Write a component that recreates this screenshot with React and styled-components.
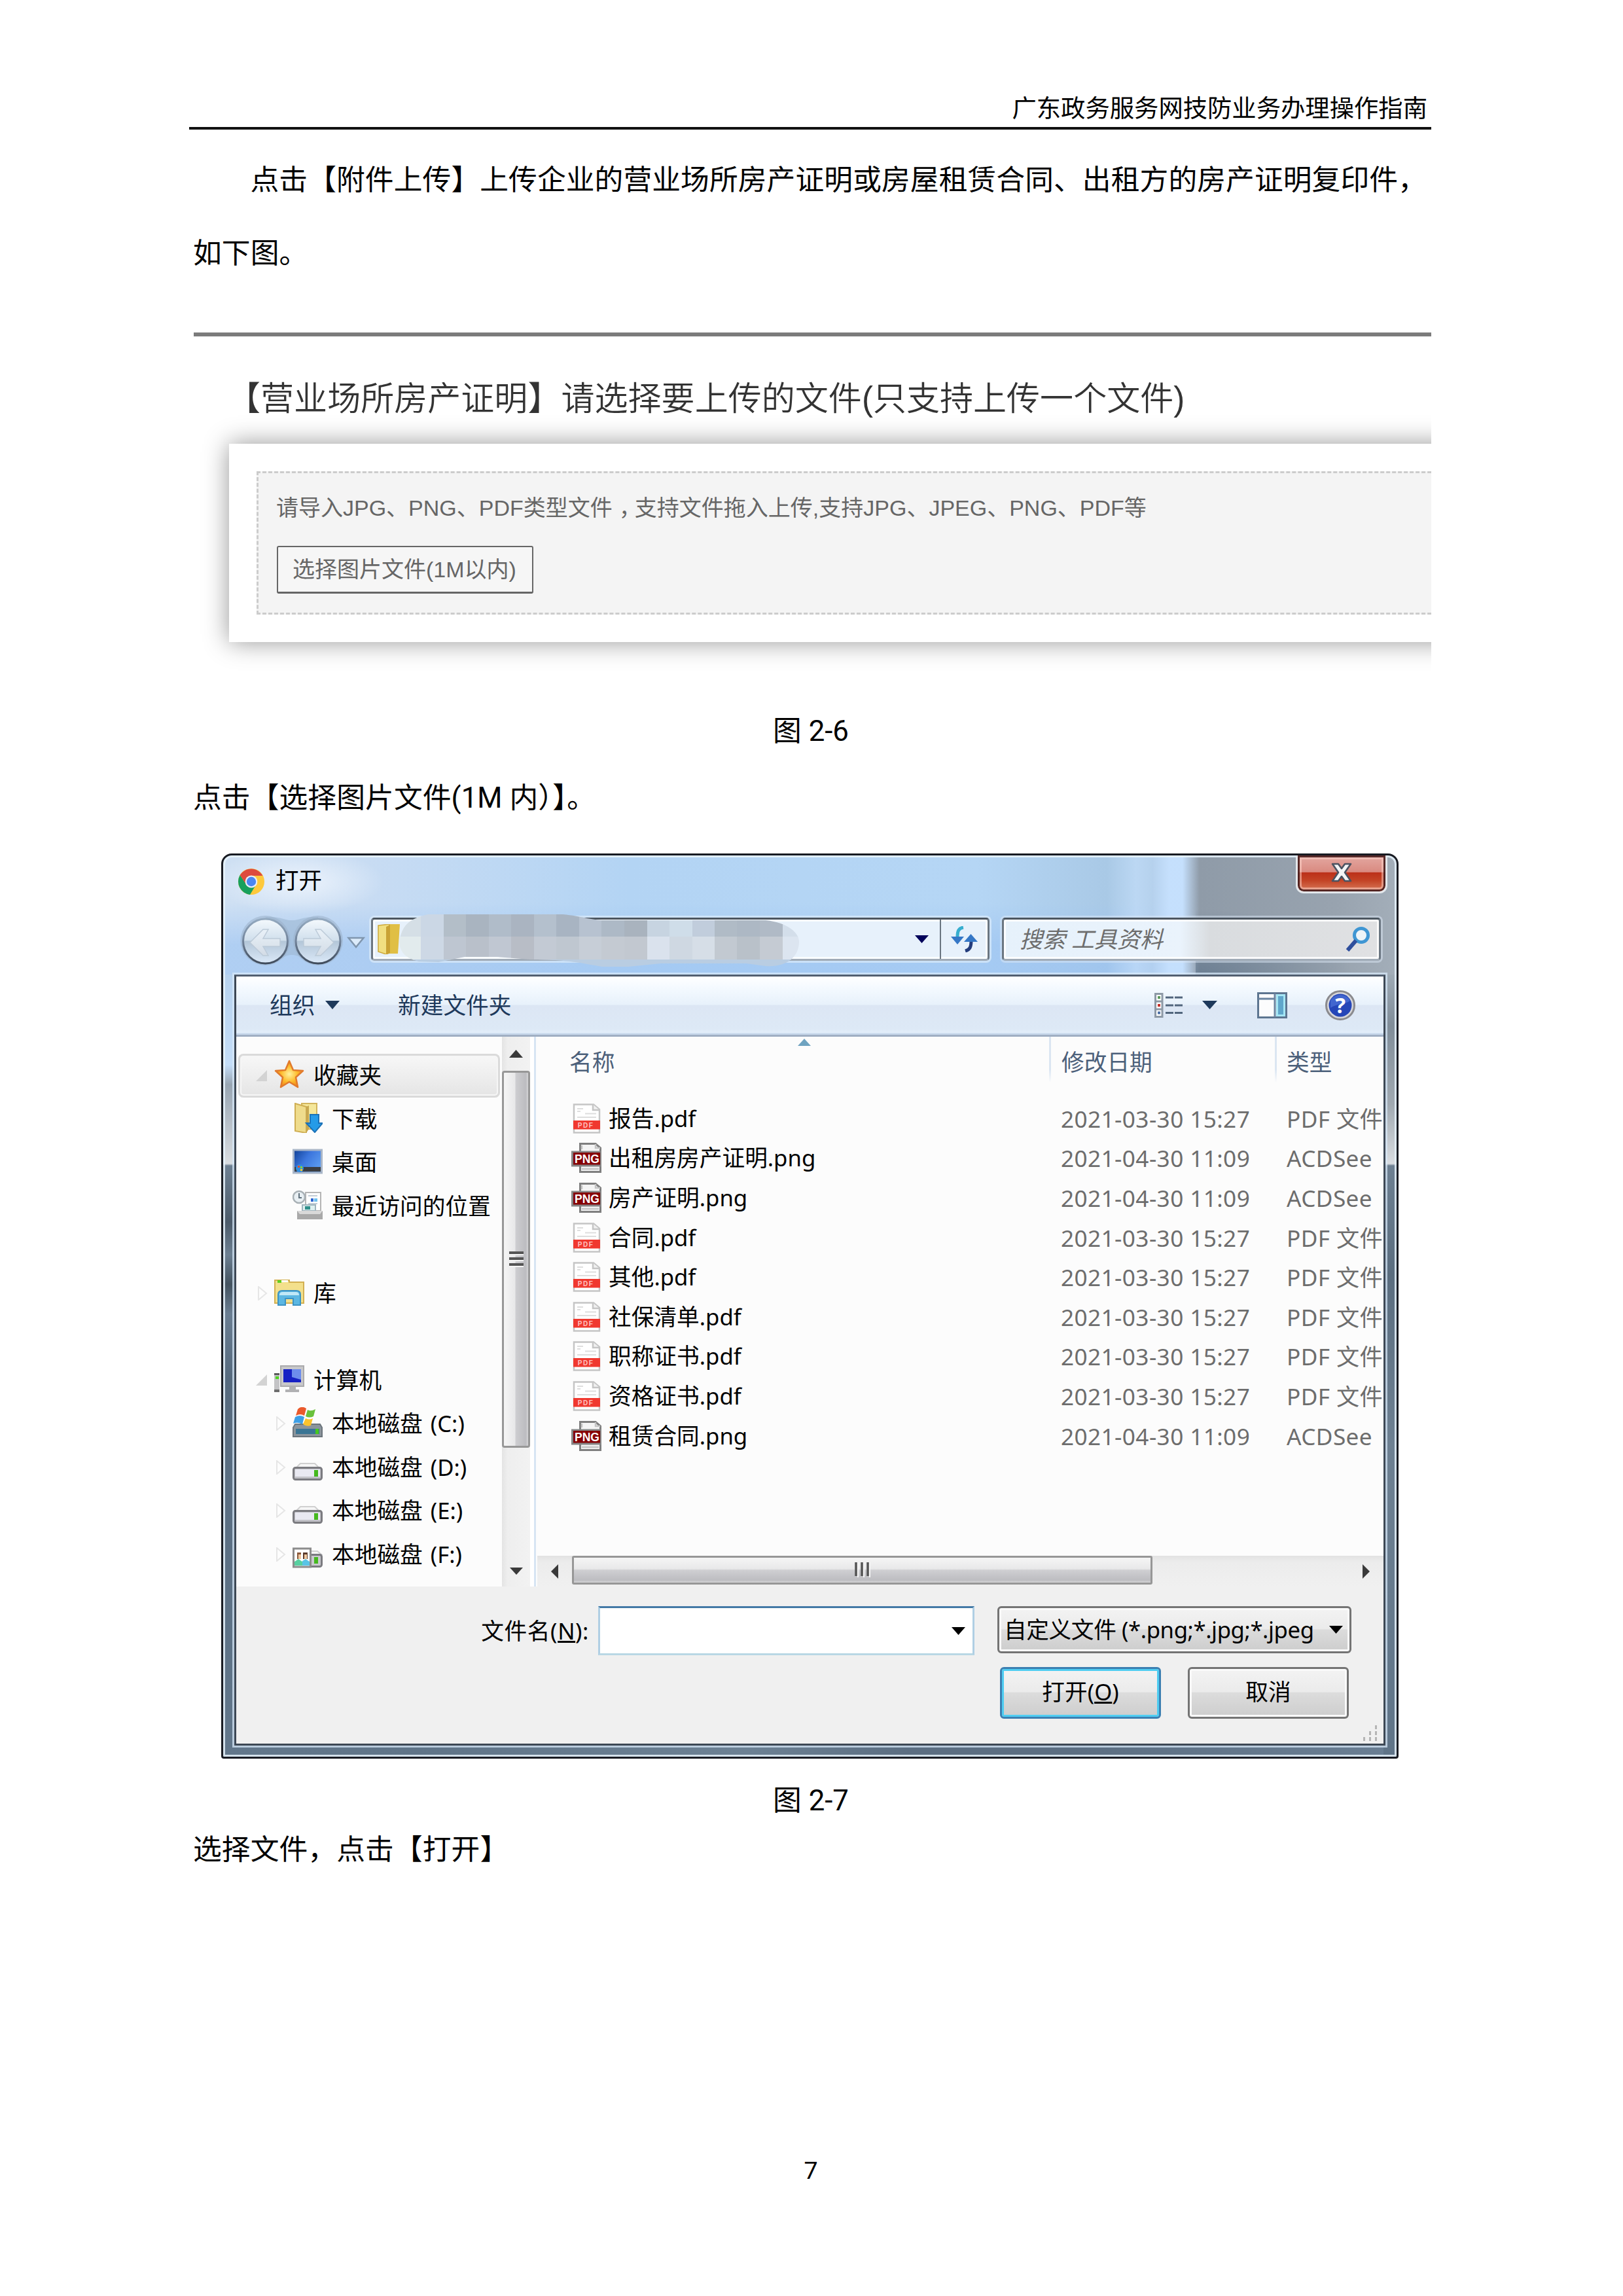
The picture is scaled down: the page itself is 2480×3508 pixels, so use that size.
import React from "react";
import styled, { createGlobalStyle, css } from "styled-components";

const GlobalStyle = createGlobalStyle`
  * {
    box-sizing: border-box;
  }
  body {
    margin: 0;
    background: #fff;
  }
  svg {
    display: block;
    flex: none;
  }
`;

const docFont = `Roboto, "Noto Sans CJK SC", sans-serif`;
const webFont = `"Liberation Sans", "Noto Sans CJK SC", sans-serif`;
const winFont = `"Noto Sans", "Noto Sans CJK SC", sans-serif`;

/* ---------- document ---------- */

const Page = styled.div`
  width: 2480px;
  height: 3508px;
  padding: 0 293px 0 295px;
  display: flex;
  flex-direction: column;
  background: #fff;
  color: #000;
  font-family: ${docFont};
  font-size: 43.75px;
  overflow: hidden;
`;

const PageHeader = styled.header`
  height: 198px;
  margin: 0 0 21px -6px;
  padding: 136px 6px 0 0;
  border-bottom: 4px solid #111;
  font-size: 37.35px;
  line-height: 60px;
  text-align: right;
`;

const Paragraph = styled.p`
  margin: ${(p) => p.$top || 0}px 0 0;
  line-height: ${(p) => p.$line || 80}px;
  text-indent: ${(p) => (p.$indent ? "2em" : 0)};
  letter-spacing: 0.09px;
  white-space: nowrap;
`;

const Caption = styled.p`
  margin: ${(p) => p.$top}px 0 0;
  line-height: ${(p) => p.$line || 80}px;
  padding-right: 4px;
  text-align: center;
`;

const PageNumber = styled.footer`
  margin-top: 430px;
  padding-right: 4px;
  font-size: 37.5px;
  line-height: 60px;
  text-align: center;
`;

/* ---------- upload panel ---------- */

const UploadFigure = styled.section`
  height: 530px;
  margin: 65px 0 0 1px;
  border-top: 6px solid #7b7b7b;
  padding: 64px 0 0 54px;
  overflow: hidden;
  font-family: ${webFont};
`;

const UploadTitle = styled.h2`
  margin: 0 0 0 -3px;
  height: 100px;
  font-size: 51.05px;
  line-height: 64px;
  font-weight: 350;
  color: #333;
  white-space: nowrap;
`;

const UploadCard = styled.div`
  width: 1900px;
  height: 303px;
  padding: 42px 0 0 42px;
  background: #fff;
  box-shadow: 0 0 36px rgba(0, 0, 0, 0.42);
`;

const DropZone = styled.div`
  height: 219px;
  padding: 31px 0 0 27px;
  border: 3px dashed #ccc;
  border-right: 0;
  background: #f4f4f4;
  color: #666;
  font-size: 34px;
  line-height: 44px;
  white-space: nowrap;
`;

const WideComma = styled.span`
  padding-left: 10px;
  letter-spacing: -10px;
`;

const PickButton = styled.button`
  display: block;
  width: 392px;
  height: 73px;
  margin: 36px 0 0 1px;
  padding: 0 0 0 22px;
  border: 2px solid #666;
  border-bottom-width: 3px;
  border-radius: 3px;
  background: #f6f6f6;
  color: #666;
  font: inherit;
  text-align: left;
`;

/* ---------- file dialog ---------- */

const Window = styled.section`
  width: 1799px;
  height: 1383px;
  margin: 45px 0 0 43px;
  padding: 0 17px 17px;
  border: 3px solid #181b22;
  border-radius: 16px 16px 4px 4px;
  display: flex;
  flex-direction: column;
  color: #000;
  font-family: ${winFont};
  font-size: 34.7px;
  line-height: 46px;
  box-shadow: inset 0 0 0 3px rgba(232, 243, 252, 0.85);
  background:
    radial-gradient(ellipse 130px 50px at 115px 40px, rgba(240, 246, 253, 0.9), transparent) no-repeat,
    radial-gradient(ellipse 240px 100px at 0 100%, rgba(85, 108, 132, 0.6), transparent) 1486px 0 / 308px 182px no-repeat,
    linear-gradient(90deg, transparent 1350px, rgba(200, 225, 252, 0.6) 1395px, rgba(190, 215, 242, 0.6) 1420px, rgba(200, 226, 255, 0.9) 1445px 1466px, #8f9ba8 1492px, #98a3af 1700px, #a3aeb9) 0 0 / 100% 182px no-repeat,
    linear-gradient(180deg, transparent 40%, rgba(155, 195, 242, 0.6) 75%) 0 0 / 100% 182px no-repeat,
    linear-gradient(90deg, #cfe0f3 0, #c8dcf3 220px, #b3d4f4 620px, #b5d6f5 1150px, #a9c9e6 1350px) 0 0 / 100% 182px no-repeat,
    linear-gradient(180deg, #9fabb6 180px, #808d99 260px, #a0a9b1 380px, #d9dde1 471px, #6d8092 474px, #5a6d7f 640px, #6d8092 900px, #5f7488 1377px) 100% 0 / 20px 100% no-repeat,
    linear-gradient(180deg, #b7d2ee 180px, #c4ddf8 320px, #98a5b2 350px, #d9dde1 471px, #6d8092 474px, #4c5b6a 560px, #6d8092 610px, #43525f 655px, #6a7e92 700px, #566a7e 800px, #62778b) 0 0 / 20px 100% no-repeat,
    linear-gradient(90deg, #62778b, #5f7488 300px, #6c8194 800px, #5b6e82 1050px, #5b6e82 1300px, #6a7f94);
`;

const TitleBar = styled.header`
  height: 88px;
  flex: none;
  display: flex;
  align-items: flex-start;
  padding-left: 6px;
`;

const TitleIcon = styled.div`
  padding-top: 20px;
`;

const WindowTitle = styled.span`
  margin: 14px 0 0 17px;
  font-size: 35.5px;
`;

const CloseButton = styled.button`
  width: 140px;
  height: 58px;
  margin: 0 -3px 0 auto;
  padding: 0 0 3px;
  display: flex;
  align-items: center;
  justify-content: center;
  border: 3px solid #e3e7eb;
  border-top: 0;
  border-radius: 0 0 12px 12px;
  background: linear-gradient(180deg, #e4a9a3 0, #d98a80 46%, #bc3019 48%, #c34426 70%, #d97c5c 100%);
  box-shadow:
    inset 0 0 0 3px rgba(60, 15, 15, 0.85),
    inset 0 0 0 6px rgba(255, 215, 205, 0.5);
`;

const NavRow = styled.div`
  height: 94px;
  flex: none;
  display: flex;
  align-items: flex-start;
  padding: 2px 0 0 6px;
`;

const glassField = css`
  height: 66px;
  margin-top: 5px;
  display: flex;
  align-items: center;
  border: 3px solid #6b7681;
  border-top-color: #4c5660;
  border-bottom-color: #a0abb7;
  border-radius: 5px;
`;

const AddressBar = styled.div`
  ${glassField}
  position: relative;
  width: 945px;
  margin-left: 7px;
  background: #e7f1fb;
  box-shadow: 0 0 0 3px rgba(220, 235, 250, 0.7), inset 0 0 0 3px #fafdff;
`;

const FolderSlot = styled.div`
  width: 46px;
  margin-left: 3px;
`;

const Mosaic = styled.svg`
  position: absolute;
  left: 40px;
  top: -9px;
`;

const AddressArrow = styled.div`
  margin-left: auto;
  padding-right: 17px;
`;

const RefreshButton = styled.div`
  width: 73px;
  height: 60px;
  display: flex;
  align-items: center;
  justify-content: center;
  border-left: 2px solid #6b7681;
`;

const SearchField = styled.div`
  ${glassField}
  width: 579px;
  margin-left: 19px;
  padding: 0 12px 0 24px;
  justify-content: space-between;
  background: linear-gradient(90deg, #e6f1fb 0, #eaf3fc 270px, #d9dcdf 315px, #e0e1e3 100%);
  box-shadow: 0 0 0 3px rgba(220, 232, 245, 0.5), inset 0 0 0 3px rgba(255, 255, 255, 0.85);
  color: #6d6d6d;
  font-size: 35px;
  font-style: italic;
`;

const WindowBody = styled.div`
  height: 1178px;
  flex: none;
  display: flex;
  flex-direction: column;
  border: 3px solid #3d4855;
  border-top-color: #525f70;
  background: #f0f0f0;
  box-shadow: 0 0 0 3px rgba(215, 232, 248, 0.75);
`;

const Toolbar = styled.div`
  height: 92px;
  flex: none;
  display: flex;
  align-items: center;
  padding: 0 43px 2px 51px;
  color: #1e395b;
  border-bottom: 3px solid #a0afc3;
  background: linear-gradient(180deg, #fff 0, #f5faff 16px, #e7f1fb 43px, #dce6f4 44px, #dde9f6 80px, #e3eefa 86px, #c6d7ea 87px);
`;

const Organize = styled.div`
  width: 196px;
  display: flex;
  align-items: center;
  gap: 16px;
`;

const ToolIcons = styled.div`
  margin-left: auto;
  display: flex;
  align-items: center;
`;

const ToolIcon = styled.div`
  margin-left: ${(p) => p.$gap}px;
`;

const Main = styled.div`
  height: 840px;
  flex: none;
  display: flex;
  background: #fcfcfc;
`;

const Sidebar = styled.nav`
  width: 406px;
  padding: 26px 3px 0;
  overflow: hidden;
`;

const TreeRow = styled.div`
  height: 66.5px;
  display: flex;
  align-items: center;
  padding-left: ${(p) => (p.$child ? 52 : 24)}px;
  word-spacing: 3px;
  white-space: nowrap;
  ${(p) =>
    p.$selected &&
    css`
      border-radius: 8px;
      background: linear-gradient(180deg, #f8f8f8, #e4e4e4);
      box-shadow: inset 0 0 0 3px #dadada, inset 0 0 0 5px #f6f6f6;
    `}
`;

const ExpanderSlot = styled.div`
  width: 31px;
  flex: none;
  padding-left: 3px;
`;

const TreeIcon = styled.div`
  width: 46px;
  height: 46px;
  margin: -4px 14px 0 0;
  flex: none;
`;

const VScroll = styled.div`
  width: 43px;
  display: flex;
  flex-direction: column;
  align-items: center;
  background: linear-gradient(90deg, #e4e4e4, #eee 20%, #f2f2f2);
`;

const VArrow = styled.div`
  height: ${(p) => p.$height}px;
  display: flex;
  align-items: center;
`;

const VThumb = styled.div`
  width: 43px;
  height: 576px;
  margin-bottom: auto;
  display: flex;
  align-items: center;
  justify-content: center;
  border: 3px solid #979797;
  border-radius: 4px;
  background: linear-gradient(90deg, #f5f5f5 0, #e8e8e9 45%, #cdcdd0 50%, #bcbcc0 90%, #d5d5d7);
`;

const Splitter = styled.div`
  width: 9px;
  background: #fff;
  border-right: 3px solid #d7e5f3;
`;

const FileList = styled.div`
  width: 1295px;
  display: flex;
  flex-direction: column;
  overflow: hidden;
`;

const columns = css`
  display: grid;
  grid-template-columns: 784px 345px 166px;
`;

const ListHeader = styled.div`
  ${columns}
  height: 94.5px;
  flex: none;
  color: #4c607a;
  line-height: 78px;
`;

const HeaderCell = styled.div`
  position: relative;
  padding-left: ${(p) => p.$pad}px;
  ${(p) =>
    p.$divided &&
    css`
      background: linear-gradient(180deg, #dbe6f2 0, #dbe6f2 50px, transparent 70px) 0 0 / 3px 70px no-repeat;
    `}
`;

const SortMark = styled.div`
  position: absolute;
  left: 400px;
  top: 3px;
`;

const FileRow = styled.div`
  ${columns}
  height: 60.6px;
  flex: none;
  align-items: center;
  white-space: nowrap;
`;

const FileName = styled.div`
  display: flex;
  align-items: center;
  gap: 11px;
  padding-left: 54px;
`;

const FileMeta = styled.div`
  padding-left: ${(p) => p.$pad}px;
  color: #6d6d6d;
  font-size: 35.2px;
  letter-spacing: 0.4px;
`;

const HScroll = styled.div`
  height: 47px;
  margin: auto 0 0 2px;
  flex: none;
  display: flex;
  align-items: center;
  background: linear-gradient(180deg, #e2e2e2, #ececec 20%, #f0f0f0);
`;

const HArrow = styled.div`
  width: 53px;
  flex: none;
  display: flex;
  justify-content: center;
`;

const HThumb = styled.div`
  width: 887px;
  height: 44px;
  margin: 0 auto 3px 0;
  flex: none;
  display: flex;
  align-items: center;
  justify-content: center;
  border: 3px solid #979797;
  border-radius: 3px;
  background: linear-gradient(180deg, #f5f5f5 0, #e8e8e9 45%, #cfcfd2 50%, #bdbdc1 90%, #d5d5d7);
`;

const BottomPanel = styled.footer`
  height: 240px;
  padding: 30px 8px 0 0;
`;

const FieldRow = styled.div`
  display: flex;
  height: 93px;
`;

const FieldLabel = styled.label`
  width: 539px;
  margin-right: 14px;
  line-height: 76px;
  letter-spacing: 0.6px;
  text-align: right;
  white-space: nowrap;
`;

const NameField = styled.div`
  width: 575px;
  height: 75px;
  padding-right: 11px;
  display: flex;
  align-items: center;
  justify-content: flex-end;
  background: #fff;
  border: 3px solid #b0cfe4;
  border-top-color: #4379a6;
  border-bottom-color: #b9d7e4;
`;

const raised = css`
  border: 3px solid #747474;
  border-radius: 6px;
  background: linear-gradient(180deg, #f3f3f3 0, #ebebeb 48%, #dcdcdc 50%, #cdcdcd 100%);
  box-shadow: inset 0 0 0 3px #fafafa;
`;

const FilterSelect = styled.div`
  ${raised}
  width: 541px;
  height: 72px;
  margin-left: 35px;
  padding: 0 10px 0 7px;
  display: flex;
  align-items: center;
  justify-content: space-between;
`;

const FilterText = styled.span`
  width: 476px;
  overflow: hidden;
  letter-spacing: -0.4px;
  white-space: nowrap;
`;

const ActionRow = styled.div`
  display: flex;
  gap: 41px;
  padding-left: 1167px;
`;

const DialogButton = styled.button`
  ${raised}
  width: 246px;
  height: 79px;
  padding: 0 0 3px;
  color: #000;
  font: inherit;
  ${(p) =>
    p.$primary &&
    css`
      border-color: #3c7fb1;
      box-shadow: inset 0 0 0 3px #4fcdf2;
    `}
`;

const ResizeGrip = styled.div`
  display: flex;
  justify-content: flex-end;
  padding-top: 9px;
`;

/* ---------- icons ---------- */

const Triangle = ({ w = 22, h = 12, dir = "down", color = "#1e395b" }) => {
  const points = {
    down: `0,0 ${w},0 ${w / 2},${h}`,
    up: `0,${h} ${w},${h} ${w / 2},0`,
    left: `${w},0 ${w},${h} 0,${h / 2}`,
    right: `0,0 0,${h} ${w},${h / 2}`,
  };
  return (
    <svg width={w} height={h}>
      <polygon points={points[dir]} fill={color} />
    </svg>
  );
};

const ChromeIcon = () => (
  <svg width="40" height="40" viewBox="0 0 40 40">
    <circle cx="20" cy="20" r="20" fill="#fdc93c" />
    <path d="M2.7 10 A20 20 0 0 0 18 39.9 L27 25 L13 25 Z" fill="#17a05d" />
    <path d="M2.7 10 A20 20 0 0 1 37.3 11 L20 11 L12 24 Z" fill="#dd4b3e" />
    <circle cx="20" cy="20" r="9.4" fill="#e9eef5" />
    <circle cx="20" cy="20" r="7.2" fill="#4a86f2" />
  </svg>
);

const CloseGlyph = () => (
  <svg width="34" height="30" viewBox="0 0 34 30">
    <path
      d="M3 2 H12 L17 9 L22 2 H31 L22 15 L31 28 H22 L17 21 L12 28 H3 L12 15 Z"
      fill="#f3f5f6"
      stroke="#4b5260"
      strokeWidth="2.6"
      strokeLinejoin="round"
    />
  </svg>
);

const NavButtons = () => (
  <svg width="196" height="80" viewBox="0 0 196 80">
    <defs>
      <linearGradient id="navFill" x1="0" y1="0" x2="0" y2="1">
        <stop offset="0" stopColor="#f4f9fd" />
        <stop offset="0.48" stopColor="#d0dfec" />
        <stop offset="0.5" stopColor="#b3c6d8" />
        <stop offset="1" stopColor="#dbe9f8" />
      </linearGradient>
      <linearGradient id="navRing" x1="0" y1="0" x2="0" y2="1">
        <stop offset="0" stopColor="#93a9bf" />
        <stop offset="0.5" stopColor="#71839a" />
        <stop offset="1" stopColor="#3f4b5b" />
      </linearGradient>
      <linearGradient id="navArrow" x1="0" y1="0" x2="0" y2="1">
        <stop offset="0" stopColor="#e9f1f8" />
        <stop offset="1" stopColor="#d3dce6" />
      </linearGradient>
    </defs>
    <path d="M42 4 C65 3 70 9 82 9 S100 3 122 4 V72 C100 72 95 62 82 62 S65 72 42 72 Z" fill="#9db7d2" opacity="0.6" />
    <circle cx="41.5" cy="40" r="38" fill="#9ab1c9" opacity="0.55" />
    <circle cx="122" cy="40" r="38" fill="#9ab1c9" opacity="0.55" />
    <circle cx="41.5" cy="41" r="34" fill="url(#navFill)" stroke="url(#navRing)" strokeWidth="3" />
    <circle cx="122" cy="41" r="34" fill="url(#navFill)" stroke="url(#navRing)" strokeWidth="3" />
    <path
      d="M18 43 L38 23 H46 L38 37 H64 V49 H38 L46 63 H38 Z"
      fill="url(#navArrow)"
      stroke="#bccad8"
      strokeWidth="1.5"
    />
    <path
      d="M146 43 L126 23 H118 L126 37 H100 V49 H126 L118 63 H126 Z"
      fill="url(#navArrow)"
      stroke="#bccad8"
      strokeWidth="1.5"
    />
    <path d="M168.5 36 H191.5 L180 50 Z" fill="#dcebfa" stroke="#8096ae" strokeWidth="2.5" />
  </svg>
);

const AddressFolder = () => (
  <svg width="46" height="46" viewBox="0 0 46 46">
    <path d="M18 0 H38 L35 45 H18 Z" fill="#e0bf45" />
    <path d="M5 2 L22 0 V44 L17 46 L5 42 Z" fill="#f1df80" stroke="#cda93a" strokeWidth="1.5" />
    <path d="M17 4 L23 1 V43 L17 46 Z" fill="#c9a234" />
  </svg>
);

const mosaicEdges = [
  0, 33, 68, 102, 137, 171, 206, 240, 275, 309, 344, 379, 413, 448, 482, 516, 551, 586, 612,
];
const mosaicTop = [
  "#d5dfe6", "#cbd7e5", "#b3bec8", "#a9b4c0", "#b0bcc9", "#aab4c1", "#b4c0cd", "#a8b4c2", "#b7c2d0",
  "#adb9c6", "#a9b3be", "#c7d4e1", "#cfdde9", "#c1cddc", "#b0bbc6", "#adb8c4", "#b0bac6", "#d3deea",
];
const mosaicBottom = [
  "#e2ebed", "#cdd8e5", "#bec6d1", "#b9c0ca", "#c0c7d2", "#b8bdc6", "#c3cad4", "#bfc7d0", "#c7ced7",
  "#c4cad2", "#c2c8d0", "#dae2ed", "#cfd8e2", "#d6dee7", "#c2c9d1", "#b9c1c9", "#c5cbd3", "#dce5f0",
];

const AddressBlur = () => (
  <Mosaic width="612" height="82" viewBox="0 0 612 82">
    <clipPath id="mosaicShape">
      <path d="M0 44 C4 18 14 8 44 1 H250 C280 4 290 9 310 10 H560 C595 14 612 30 611 44 C610 68 590 82 560 80 L530 76 H400 L350 81 H310 C280 76 260 70 200 70 L150 66 H100 L60 74 L30 73 C10 68 2 60 0 44 Z" />
    </clipPath>
    <g clipPath="url(#mosaicShape)">
      {mosaicTop.map((color, i) => (
        <g key={i}>
          <rect x={mosaicEdges[i]} y="0" width={mosaicEdges[i + 1] - mosaicEdges[i] + 0.5} height="36" fill={color} />
          <rect x={mosaicEdges[i]} y="35" width={mosaicEdges[i + 1] - mosaicEdges[i] + 0.5} height="36" fill={mosaicBottom[i]} />
        </g>
      ))}
      <rect x="0" y="70" width="612" height="12" fill="#b9cde2" />
    </g>
  </Mosaic>
);

const RefreshIcon = () => (
  <svg width="42" height="40" viewBox="0 0 42 40">
    <path d="M19 2 C12 3 10 7 10 17" fill="none" stroke="#37aecf" strokeWidth="5" />
    <path d="M0 16 H20 L10 28 Z" fill="#3577c6" />
    <path d="M31 22 C31 32 29 36 22 38" fill="none" stroke="#233c7c" strokeWidth="5" />
    <path d="M20 24 H41 L30.5 12 Z" fill="#3577c6" />
  </svg>
);

const SearchIcon = () => (
  <svg width="40" height="40" viewBox="0 0 40 40">
    <circle cx="25" cy="14" r="10.5" fill="#eef4f8" stroke="#3f96d3" strokeWidth="5" />
    <path d="M17 22 L4 37" stroke="#2f4f9c" strokeWidth="6" />
  </svg>
);

const ViewIcon = () => (
  <svg width="43" height="38" viewBox="0 0 43 38">
    <path d="M1.5 1.5 H12 V36.5 H1.5 Z M1.5 13 H12 M1.5 25 H12" fill="#fff" stroke="#8d99a6" strokeWidth="3" />
    <rect x="5" y="5" width="4" height="4" fill="#5d9b5d" />
    <rect x="5" y="17" width="4" height="4" fill="#c4302b" />
    <rect x="5" y="28.5" width="4" height="4" fill="#4b6fa5" />
    <path d="M17 7 H29 M31 7 H43 M17 19 H29 M31 19 H43 M17 30.5 H29 M31 30.5 H43" stroke="#51657c" strokeWidth="3" />
  </svg>
);

const PaneIcon = () => (
  <svg width="46" height="40" viewBox="0 0 46 40">
    <rect x="1.5" y="1.5" width="43" height="37" fill="#fcfcfd" stroke="#5d7590" strokeWidth="3" />
    <path d="M2 10 H27 M27 2 V38" stroke="#6b84a0" strokeWidth="3" />
    <rect x="29" y="3" width="14" height="34" fill="#a5e6f4" />
    <rect x="32" y="6" width="8" height="28" fill="#5fa6cb" />
  </svg>
);

const HelpIcon = () => (
  <svg width="46" height="46" viewBox="0 0 46 46">
    <circle cx="23" cy="23" r="21.5" fill="#d7d7da" stroke="#8a8a8e" strokeWidth="3" />
    <circle cx="23" cy="23" r="17.5" fill="#2546b8" />
    <path d="M8 16 A17 17 0 0 1 38 16 C30 22 18 20 8 27 Z" fill="#4d74d8" opacity="0.7" />
    <text x="23" y="34.5" textAnchor="middle" fontFamily="Noto Sans" fontWeight="700" fontSize="33" fill="#fff">
      ?
    </text>
  </svg>
);

const Expander = ({ open }) =>
  open ? (
    <svg width="17" height="17">
      <polygon points="0,17 17,0 17,17" fill="#d3d3d3" />
    </svg>
  ) : (
    <svg width="18" height="22">
      <polygon points="4,1 16,11 4,21" fill="#fdfdfd" stroke="#e6e6e6" strokeWidth="2" />
    </svg>
  );

const StarIcon = () => (
  <svg width="46" height="46" viewBox="0 0 46 46">
    <defs>
      <radialGradient id="starFill">
        <stop offset="0" stopColor="#fff2a0" />
        <stop offset="0.6" stopColor="#fdbb2b" />
        <stop offset="1" stopColor="#f08a1c" />
      </radialGradient>
    </defs>
    <path
      d="M23 3 L29 17 L44 18 L33 28 L36 43 L23 35 L10 43 L13 28 L2 18 L17 17 Z"
      fill="url(#starFill)"
      stroke="#e17a2c"
      strokeWidth="2.5"
      strokeLinejoin="round"
    />
  </svg>
);

const DownloadIcon = () => (
  <svg width="46" height="46" viewBox="0 0 46 46">
    <path d="M14 1 H37 V40 H14 Z" fill="#f4e79a" stroke="#d2b45c" strokeWidth="2" />
    <path d="M4 1 L21 6 V46 L4 43 Z" fill="#efdc8c" stroke="#cfae52" strokeWidth="2" />
    <path d="M21 6 L25 4 V40 L21 46 Z" fill="#c8a850" />
    <path d="M27 18 H40 V31 H46 L34 45 L21 31 H27 Z" fill="#259be8" stroke="#1b72b8" strokeWidth="2" />
  </svg>
);

const DesktopIcon = () => (
  <svg width="46" height="46" viewBox="0 0 46 46">
    <defs>
      <linearGradient id="deskFill" x1="0" y1="0" x2="1" y2="0.6">
        <stop offset="0" stopColor="#0f3f94" />
        <stop offset="0.5" stopColor="#3c76dd" />
        <stop offset="1" stopColor="#5b9bf0" />
      </linearGradient>
    </defs>
    <rect x="1.5" y="6" width="43" height="35" fill="url(#deskFill)" stroke="#a9b6c8" strokeWidth="3" />
    <rect x="3" y="32" width="40" height="7" fill="#3b3e42" />
    <circle cx="11" cy="34" r="6" fill="#2f8de0" />
    <rect x="8" y="30" width="3" height="3" fill="#e8502c" />
    <rect x="12" y="31" width="3" height="3" fill="#8ccf3a" />
    <rect x="12" y="35" width="3" height="3" fill="#f6c52c" />
  </svg>
);

const RecentIcon = () => (
  <svg width="46" height="46" viewBox="0 0 46 46">
    <rect x="20" y="4" width="23" height="28" fill="#fff" stroke="#b5b5b5" strokeWidth="2" />
    <path d="M24 9 H38 M24 21 H38" stroke="#c3cdd6" strokeWidth="2" />
    <rect x="28" y="13" width="4" height="5" fill="#2b62d0" />
    <rect x="33" y="13" width="5" height="5" fill="#6ec0ee" />
    <rect x="15" y="23" width="20" height="9" fill="#dff0f0" stroke="#9fb4bd" strokeWidth="2" />
    <rect x="19" y="25" width="8" height="5" fill="#2f8f8a" />
    <path d="M7 32 H46 V45 H7 Z" fill="#a9a9a9" />
    <path d="M7 32 H46 L42 37 H11 Z" fill="#d9d9d9" />
    <circle cx="10" cy="11" r="9" fill="#e8eff3" stroke="#a8b0b5" strokeWidth="2.5" />
    <path d="M10 5 V12 H14" fill="none" stroke="#60707c" strokeWidth="2" />
  </svg>
);

const LibraryIcon = () => (
  <svg width="46" height="46" viewBox="0 0 46 46">
    <path d="M1 5 H23 V8 H45 V40 H1 Z" fill="#f3e08c" stroke="#d3b052" strokeWidth="2" />
    <rect x="5" y="5" width="6" height="4" fill="#5fd020" />
    <rect x="11" y="5" width="10" height="3" fill="#fff" />
    <path d="M6 43 V27 Q6 21 12 21 H34 Q40 21 40 27 V43 H29 V33 H17 V43 Z" fill="#5cb7e2" stroke="#3c93c4" strokeWidth="2" />
    <path d="M8 28 Q8 23 13 23 H33 Q38 23 38 28 Z" fill="#c0e8f7" />
  </svg>
);

const ComputerIcon = () => (
  <svg width="46" height="46" viewBox="0 0 46 46">
    <rect x="0" y="15" width="8" height="28" fill="#c4c4c6" />
    <rect x="0" y="14" width="8" height="3" fill="#5b5b5b" />
    <rect x="2" y="19" width="5" height="4" fill="#4fd61f" />
    <rect x="0" y="39" width="8" height="4" fill="#6d6d6d" />
    <rect x="10" y="3" width="35" height="31" fill="#c8c8ca" stroke="#aaaaac" strokeWidth="2" />
    <rect x="14" y="8" width="27" height="20" fill="#1620c4" />
    <path d="M27 8 H41 V24 L27 20 Z" fill="#6d8cec" />
    <path d="M23 34 H33 V39 H38 V43 H17 V39 H23 Z" fill="#b1b1b3" />
  </svg>
);

const SystemDriveIcon = () => (
  <svg width="46" height="46" viewBox="0 0 46 46">
    <path d="M4 26 H42 L45 31 V45 H1 V31 Z" fill="#8b959d" stroke="#6c757c" strokeWidth="2" />
    <rect x="5" y="33" width="36" height="8" fill="#3a7595" />
    <rect x="35" y="33" width="5" height="8" fill="#45c81e" />
    <path d="M8 3 Q14 -3 21 2 L18 13 Q12 9 5 13 Z" fill="#ea5a2c" />
    <path d="M23 4 Q28 7 35 3 L32 14 Q26 17 20 14 Z" fill="#6ac13c" />
    <path d="M4 15 Q11 11 18 15 L15 26 Q8 22 1 25 Z" fill="#3d9fe6" />
    <path d="M20 17 Q26 20 31 17 L28 28 Q21 30 16 26 Z" fill="#fbc32d" />
  </svg>
);

const DriveIcon = () => (
  <svg width="46" height="46" viewBox="0 0 46 46">
    <path d="M12 19 H34 L40 25 H6 Z" fill="#f6f6f6" stroke="#d0d0d0" strokeWidth="2" />
    <rect x="1.5" y="25.5" width="43" height="18" rx="3" fill="#c2c2c8" stroke="#7b7b80" strokeWidth="3" />
    <rect x="4" y="28" width="38" height="11" fill="#e9e9f2" />
    <rect x="33" y="29" width="6" height="10" fill="#45b81e" />
  </svg>
);

const PhotoDriveIcon = () => (
  <svg width="46" height="46" viewBox="0 0 46 46">
    <path d="M28 20 H38 L44 25 H28 Z" fill="#f6f6f6" stroke="#d0d0d0" strokeWidth="2" />
    <rect x="26" y="25.5" width="18.5" height="18" rx="3" fill="#c9c9ce" stroke="#7b7b80" strokeWidth="3" />
    <rect x="33" y="29" width="6" height="10" fill="#45b81e" />
    <rect x="1.5" y="16" width="26" height="28" fill="#fff" stroke="#8c8c8c" strokeWidth="3" />
    <rect x="7" y="22" width="6" height="10" fill="#8a5a3c" />
    <rect x="16" y="22" width="7" height="10" fill="#5a3a2c" />
    <rect x="9" y="25" width="4" height="7" fill="#f0c8a0" />
    <rect x="18" y="25" width="4" height="7" fill="#f0c8a0" />
    <path d="M3 42 V36 L9 32 L15 36 V42 Z" fill="#58d0a0" />
    <path d="M15 42 V35 L20 32 L26 36 V42 Z" fill="#5ac4e6" />
  </svg>
);

const PdfIcon = () => (
  <svg width="46" height="46" viewBox="0 0 46 46">
    <path d="M4 1.5 H34 L43 9 V44.5 H4 Z" fill="#fff" stroke="#c5c5c5" strokeWidth="2.5" />
    <path d="M33 1.5 V10 H43" fill="#f0f0f0" stroke="#c5c5c5" strokeWidth="2.5" />
    <path d="M9 8 H18 M9 12 H14 M21 15.5 H38 M9 21 H38" stroke="#dedede" strokeWidth="2" />
    <rect x="3" y="26" width="41" height="13.5" fill="#f0382f" />
    <text x="22" y="36.5" textAnchor="middle" fontFamily="Liberation Sans" fontWeight="700" fontSize="10" letterSpacing="1.5" fill="#ffc4c0">
      PDF
    </text>
  </svg>
);

const PngIcon = () => (
  <svg width="46" height="46" viewBox="0 0 46 46">
    <path d="M13.5 1.5 H37 L44.5 8 V44.5 H13.5 Z" fill="#f4f4f4" stroke="#7f7f7f" strokeWidth="3" />
    <path d="M37 2 V8 H44 M16 40 H42 M16 4 V10" fill="none" stroke="#c4c4c4" strokeWidth="2.5" />
    <rect x="0" y="12.5" width="46" height="24" fill="#868686" />
    <rect x="3" y="15" width="41" height="18.5" fill="#860004" />
    <text x="24" y="31" textAnchor="middle" fontFamily="Liberation Sans" fontWeight="700" fontSize="18" textLength="38" lengthAdjust="spacingAndGlyphs" fill="#fff">
      PNG
    </text>
  </svg>
);

const GripV = () => (
  <svg width="22" height="26">
    <path d="M0 3 H22 M0 12 H22 M0 21 H22" stroke="#555" strokeWidth="4" />
    <path d="M0 6 H22 M0 15 H22 M0 24 H22" stroke="#f6f6f6" strokeWidth="2" />
  </svg>
);

const GripH = () => (
  <svg width="26" height="24">
    <path d="M3 0 V21 M12 0 V21 M21 0 V21" stroke="#555" strokeWidth="3.5" />
    <path d="M6 0 V23 M15 0 V23 M24 0 V23" stroke="#f6f6f6" strokeWidth="2" />
  </svg>
);

const GripDots = () => (
  <svg width="24" height="26" fill="#b5b5b5">
    <rect x="19" y="1" width="3" height="6" />
    <rect x="10" y="10" width="3" height="6" />
    <rect x="19" y="10" width="3" height="6" />
    <rect x="1" y="19" width="3" height="6" />
    <rect x="10" y="19" width="3" height="6" />
    <rect x="19" y="19" width="3" height="6" />
  </svg>
);

/* ---------- data ---------- */

const tree = [
  { label: "收藏夹", icon: StarIcon, expander: "open", selected: true },
  { label: "下载", icon: DownloadIcon, child: true },
  { label: "桌面", icon: DesktopIcon, child: true },
  { label: "最近访问的位置", icon: RecentIcon, child: true },
  null,
  { label: "库", icon: LibraryIcon, expander: "closed" },
  null,
  { label: "计算机", icon: ComputerIcon, expander: "open" },
  { label: "本地磁盘 (C:)", icon: SystemDriveIcon, child: true, expander: "closed" },
  { label: "本地磁盘 (D:)", icon: DriveIcon, child: true, expander: "closed" },
  { label: "本地磁盘 (E:)", icon: DriveIcon, child: true, expander: "closed" },
  { label: "本地磁盘 (F:)", icon: PhotoDriveIcon, child: true, expander: "closed" },
];

const pdf = { icon: PdfIcon, date: "2021-03-30 15:27", type: "PDF 文件" };
const png = { icon: PngIcon, date: "2021-04-30 11:09", type: "ACDSee" };

const files = [
  { name: "报告.pdf", ...pdf },
  { name: "出租房房产证明.png", ...png },
  { name: "房产证明.png", ...png },
  { name: "合同.pdf", ...pdf },
  { name: "其他.pdf", ...pdf },
  { name: "社保清单.pdf", ...pdf },
  { name: "职称证书.pdf", ...pdf },
  { name: "资格证书.pdf", ...pdf },
  { name: "租赁合同.png", ...png },
];

/* ---------- sections ---------- */

const UploadPanel = () => (
  <UploadFigure>
    <UploadTitle>【营业场所房产证明】请选择要上传的文件(只支持上传一个文件)</UploadTitle>
    <UploadCard>
      <DropZone>
        请导入JPG、PNG、PDF类型文件<WideComma>，</WideComma>支持文件拖入上传,支持JPG、JPEG、PNG、PDF等
        <PickButton type="button">选择图片文件(1M以内)</PickButton>
      </DropZone>
    </UploadCard>
  </UploadFigure>
);

const FolderTree = () => (
  <Sidebar>
    {tree.map((item, i) => {
      if (!item) return <TreeRow key={i} />;
      const Icon = item.icon;
      return (
        <TreeRow key={i} $child={item.child} $selected={item.selected}>
          <ExpanderSlot>{item.expander && <Expander open={item.expander === "open"} />}</ExpanderSlot>
          <TreeIcon>
            <Icon />
          </TreeIcon>
          {item.label}
        </TreeRow>
      );
    })}
  </Sidebar>
);

const Files = () => (
  <FileList>
    <ListHeader>
      <HeaderCell $pad={51}>
        名称
        <SortMark>
          <Triangle w={20} h={11} dir="up" color="#6fa3c0" />
        </SortMark>
      </HeaderCell>
      <HeaderCell $pad={19} $divided>
        修改日期
      </HeaderCell>
      <HeaderCell $pad={18} $divided>
        类型
      </HeaderCell>
    </ListHeader>
    {files.map((file) => {
      const Icon = file.icon;
      return (
        <FileRow key={file.name}>
          <FileName>
            <Icon />
            {file.name}
          </FileName>
          <FileMeta $pad={18}>{file.date}</FileMeta>
          <FileMeta $pad={18}>{file.type}</FileMeta>
        </FileRow>
      );
    })}
    <HScroll>
      <HArrow>
        <Triangle w={11} h={22} dir="left" color="#3a3a3a" />
      </HArrow>
      <HThumb>
        <GripH />
      </HThumb>
      <HArrow>
        <Triangle w={11} h={22} dir="right" color="#3a3a3a" />
      </HArrow>
    </HScroll>
  </FileList>
);

const OpenDialog = () => (
  <Window>
    <TitleBar>
      <TitleIcon>
        <ChromeIcon />
      </TitleIcon>
      <WindowTitle>打开</WindowTitle>
      <CloseButton type="button">
        <CloseGlyph />
      </CloseButton>
    </TitleBar>
    <NavRow>
      <NavButtons />
      <AddressBar>
        <FolderSlot>
          <AddressFolder />
        </FolderSlot>
        <AddressBlur />
        <AddressArrow>
          <Triangle w={21} h={12} color="#00005a" />
        </AddressArrow>
        <RefreshButton>
          <RefreshIcon />
        </RefreshButton>
      </AddressBar>
      <SearchField>
        搜索 工具资料
        <SearchIcon />
      </SearchField>
    </NavRow>
    <WindowBody>
      <Toolbar>
        <Organize>
          组织
          <Triangle w={22} h={13} />
        </Organize>
        新建文件夹
        <ToolIcons>
          <ViewIcon />
          <ToolIcon $gap={30}>
            <Triangle w={23} h={13} />
          </ToolIcon>
          <ToolIcon $gap={61}>
            <PaneIcon />
          </ToolIcon>
          <ToolIcon $gap={58}>
            <HelpIcon />
          </ToolIcon>
        </ToolIcons>
      </Toolbar>
      <Main>
        <FolderTree />
        <VScroll>
          <VArrow $height={52}>
            <Triangle w={21} h={12} dir="up" color="#3a3a3a" />
          </VArrow>
          <VThumb>
            <GripV />
          </VThumb>
          <VArrow $height={48}>
            <Triangle w={20} h={11} color="#3a3a3a" />
          </VArrow>
        </VScroll>
        <Splitter />
        <Files />
      </Main>
      <BottomPanel>
        <FieldRow>
          <FieldLabel>
            文件名(<u>N</u>):
          </FieldLabel>
          <NameField>
            <Triangle w={21} h={12} color="#000" />
          </NameField>
          <FilterSelect>
            <FilterText>自定义文件 (*.png;*.jpg;*.jpeg</FilterText>
            <Triangle w={21} h={12} color="#000" />
          </FilterSelect>
        </FieldRow>
        <ActionRow>
          <DialogButton type="button" $primary>
            打开(<u>O</u>)
          </DialogButton>
          <DialogButton type="button">取消</DialogButton>
        </ActionRow>
        <ResizeGrip>
          <GripDots />
        </ResizeGrip>
      </BottomPanel>
    </WindowBody>
  </Window>
);

const App = () => (
  <>
    <GlobalStyle />
    <Page>
      <PageHeader>广东政务服务网技防业务办理操作指南</PageHeader>
      <Paragraph $line={112} $indent>
        点击【附件上传】上传企业的营业场所房产证明或房屋租赁合同、出租方的房产证明复印件，
      </Paragraph>
      <Paragraph $line={112}>如下图。</Paragraph>
      <UploadPanel />
      <Caption $top={39}>图 2-6</Caption>
      <Paragraph $top={22}>点击【选择图片文件(1M 内）】。</Paragraph>
      <OpenDialog />
      <Caption $top={34} $line={60}>
        图 2-7
      </Caption>
      <Paragraph $top={15} $line={60}>
        选择文件，点击【打开】
      </Paragraph>
      <PageNumber>7</PageNumber>
    </Page>
  </>
);

export default App;
